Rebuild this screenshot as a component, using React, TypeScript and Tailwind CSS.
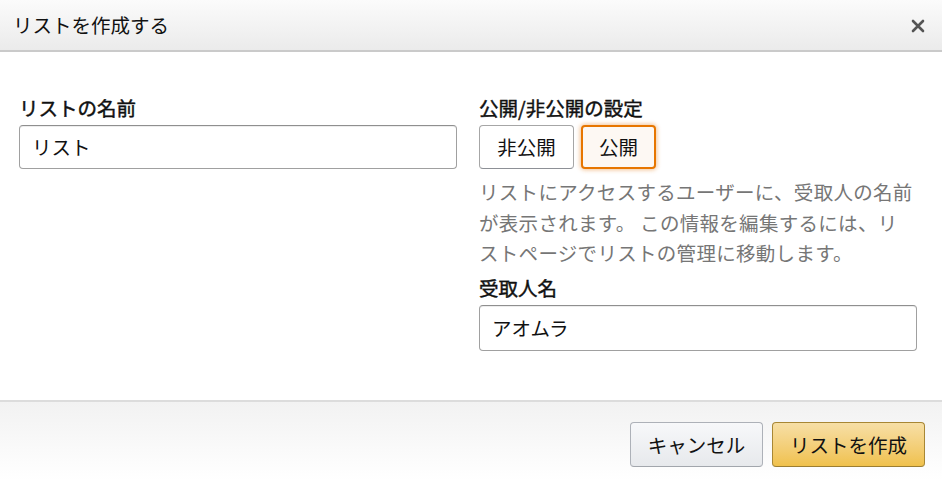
const font = "font-['Noto_Sans_CJK_JP','Noto_Sans',sans-serif]";

// the label weight sits between regular and bold, so a light stroke on regular
const Label = ({ children }: { children: string }) => (
  <div className="text-[19.5px] font-normal leading-[26px] text-[#111] [-webkit-text-stroke:0.45px_#111]">
    {children}
  </div>
);

export default function App() {
  return (
    <div className={`${font} w-[942px] h-[480px] flex flex-col bg-white text-[#111]`}>
      {/* header */}
      <div className="h-[52px] shrink-0 flex items-center justify-between pl-[13px] pr-[17px] bg-gradient-to-b from-[#fbfbfb] to-[#ebebeb] border-b-2 border-[#cacaca]">
        <span className="text-[19.5px] leading-none">リストを作成する</span>
        <svg width="14" height="14" viewBox="0 0 14 14" className="mt-[2px]">
          <path d="M2 2 L12 12 M12 2 L2 12" stroke="#555" strokeWidth="2.6" strokeLinecap="round" />
        </svg>
      </div>

      {/* body */}
      <div className="flex-1 flex gap-[22px] pl-[19px] pt-[43px]">
        <div className="w-[438px] flex flex-col gap-[4px]">
          <Label>リストの名前</Label>
          <div className="h-[44px] flex items-center px-[12px] border border-[#a0a0a0] border-t-[#8f8f8f] rounded-[4px] shadow-[inset_0_1px_0_rgba(0,0,0,0.07)] text-[19.5px]">
            リスト
          </div>
        </div>

        <div className="w-[438px] flex flex-col">
          <Label>公開/非公開の設定</Label>
          <div className="flex gap-[7px] mt-[4px]">
            <div className="w-[95px] h-[44px] flex items-center justify-center border border-[#a6a6a6] border-b-[#8d9096] rounded-[4px] bg-white text-[19.5px]">
              非公開
            </div>
            <div className="w-[75px] h-[44px] flex items-center justify-center border-2 border-[#e77600] rounded-[4px] bg-[#fdf8f3] shadow-[0_0_4px_1px_rgba(228,121,17,0.45)] text-[19.5px]">
              公開
            </div>
          </div>
          <p className="mt-[8px] text-[19.5px] leading-[30.5px] text-[#767676] tracking-[0.3px]">
            リストにアクセスするユーザーに、受取人の名前が表示されます。 この情報を編集するには、リストページでリストの管理に移動します。
          </p>
          <div className="mt-[6px]">
            <Label>受取人名</Label>
          </div>
          <div className="mt-[4px] h-[46px] flex items-center px-[12px] border border-[#a0a0a0] border-t-[#8f8f8f] rounded-[4px] shadow-[inset_0_1px_0_rgba(0,0,0,0.07)] text-[19.5px]">
            アオムラ
          </div>
        </div>
      </div>

      {/* footer */}
      <div className="h-[80px] shrink-0 flex items-center justify-end gap-[9px] pr-[17px] pt-[7px] border-t-2 border-[#dcdcdc] bg-gradient-to-b from-[#f2f2f2] to-white">
        <div className="w-[133px] h-[45px] flex items-center justify-center rounded-[4px] border border-[#adb1b8] border-b-[#a2a6ac] bg-gradient-to-b from-[#f7f8fa] to-[#e7e9ec] text-[19.5px]">
          キャンセル
        </div>
        <div className="w-[153px] h-[45px] flex items-center justify-center rounded-[4px] border border-[#a88734] border-b-[#9c7e31] bg-gradient-to-b from-[#f7dfa5] to-[#f0c14b] text-[19.5px]">
          リストを作成
        </div>
      </div>
    </div>
  );
}
